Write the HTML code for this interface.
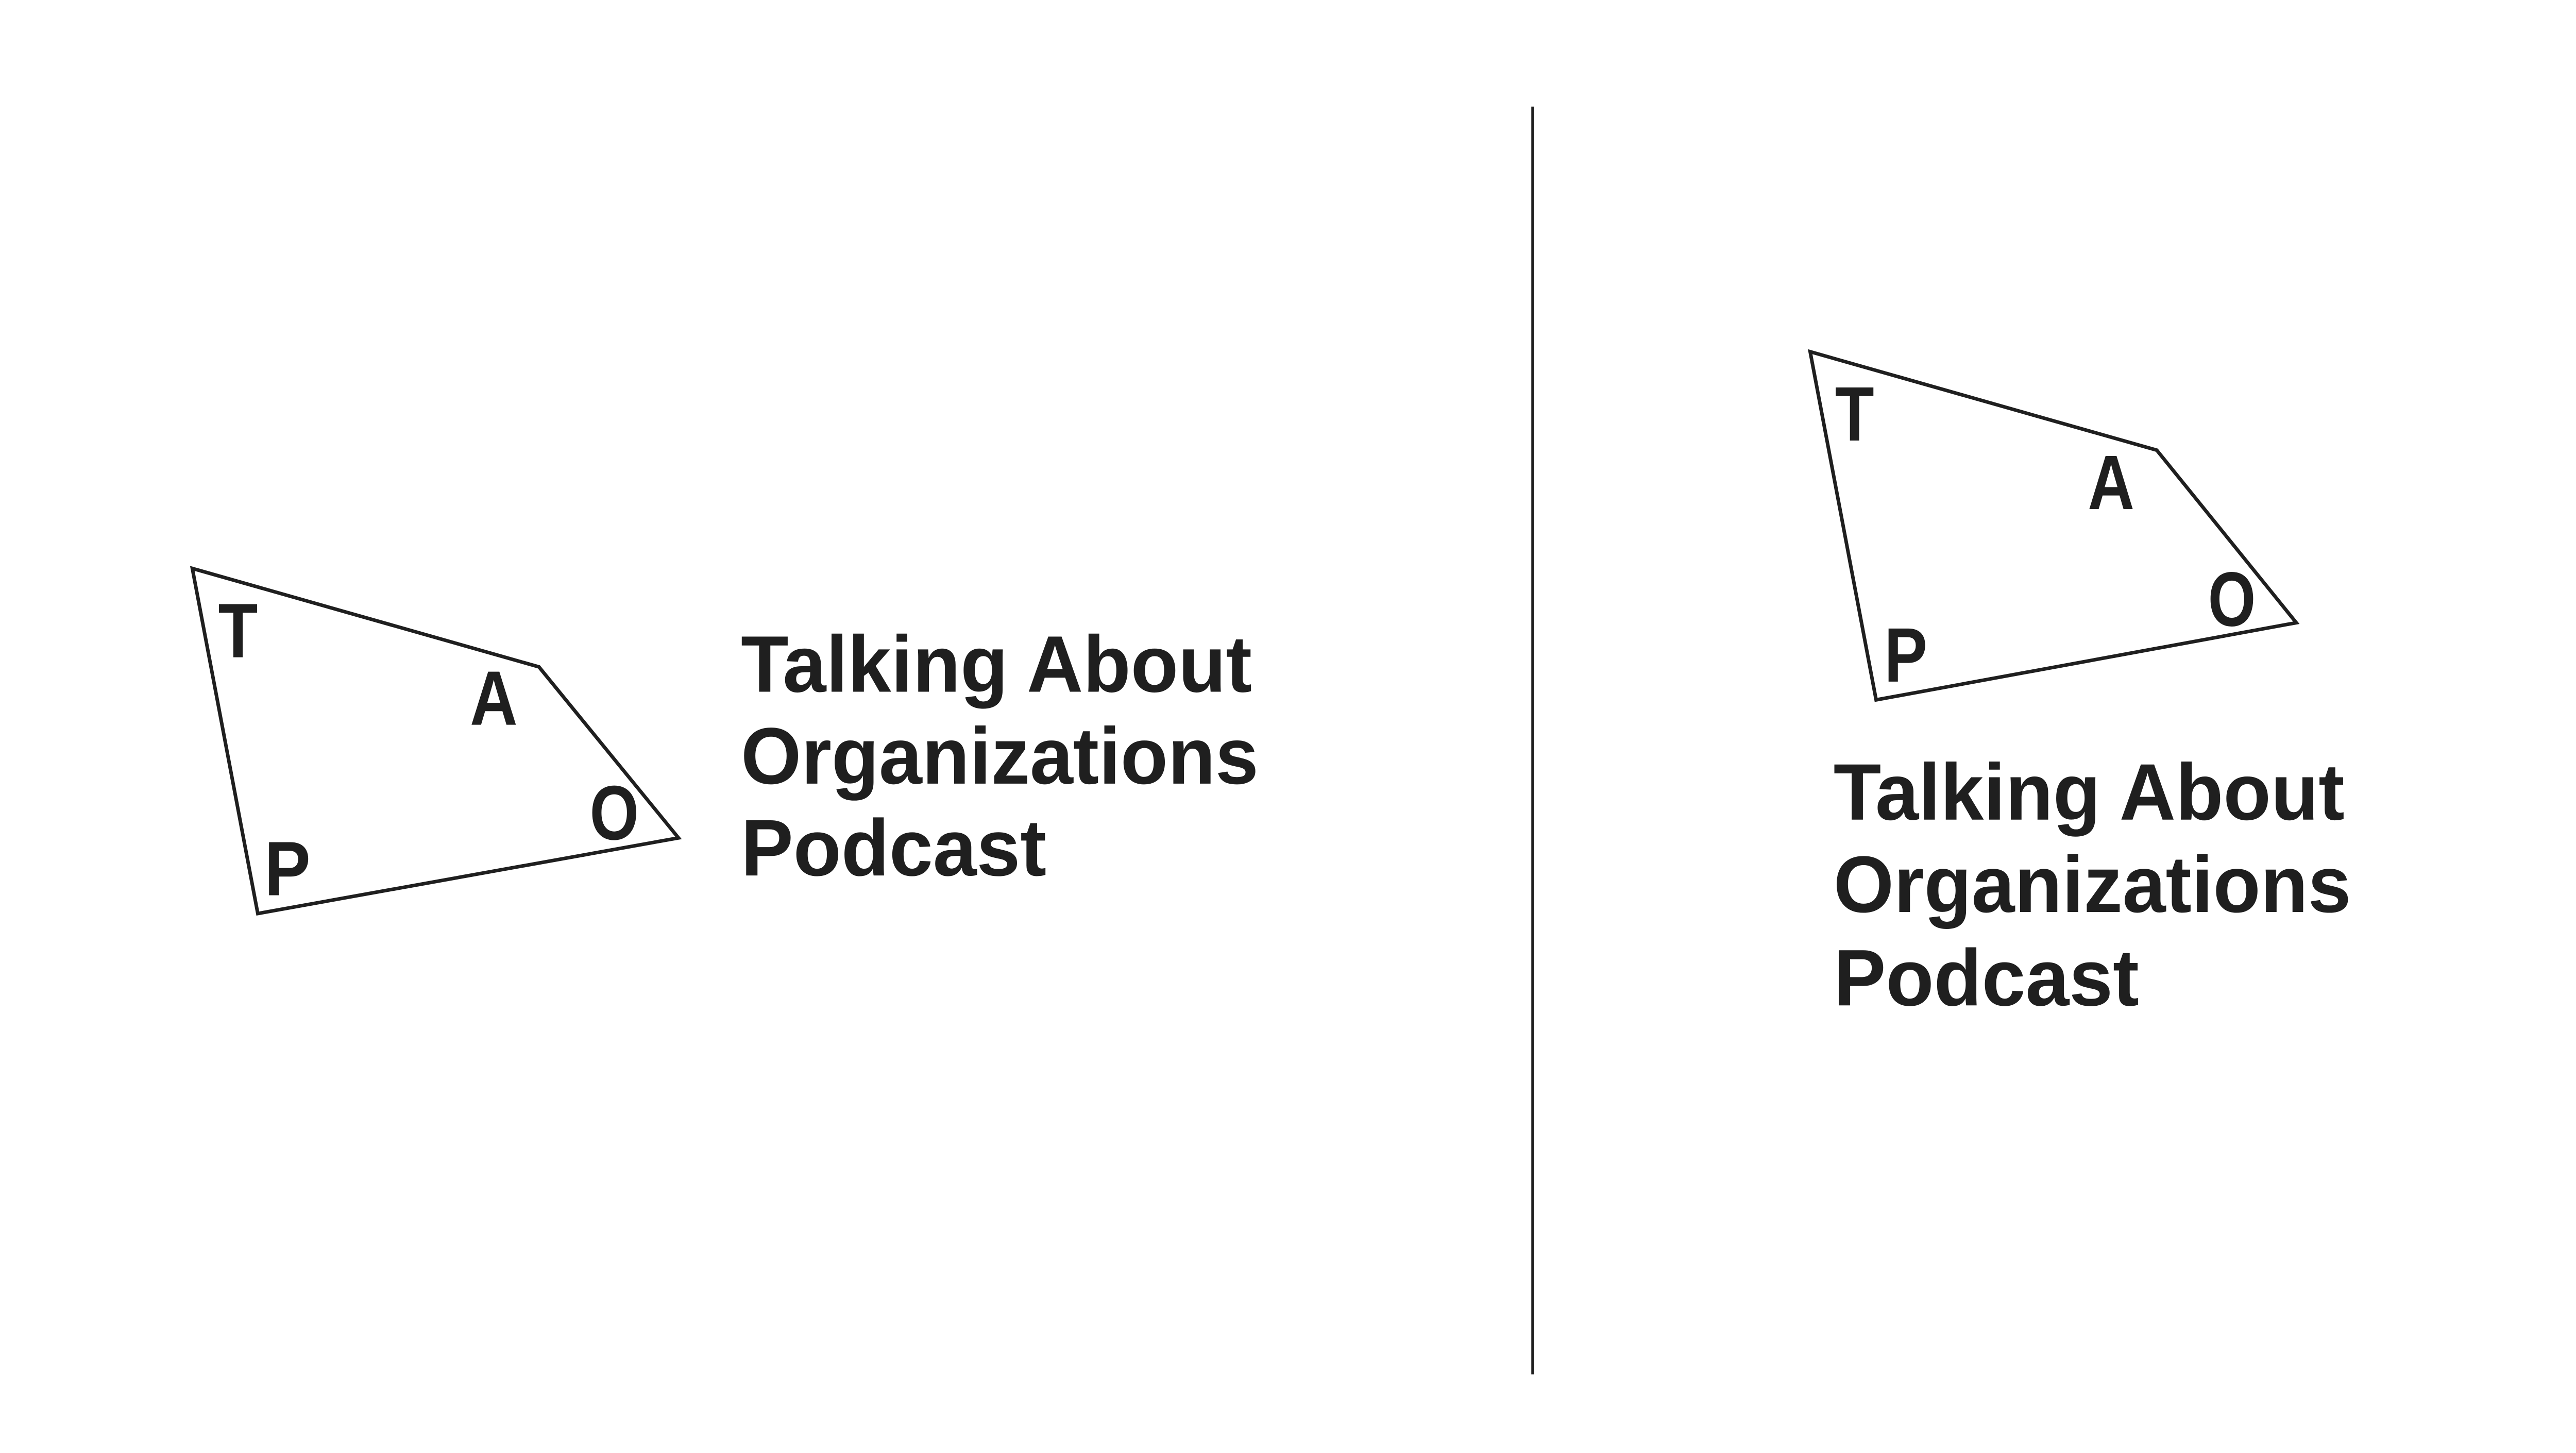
<!DOCTYPE html>
<html><head><meta charset="utf-8"><style>
html,body{margin:0;padding:0;background:#fff;}
svg{display:block;}
text{font-family:"Liberation Sans",Arial,sans-serif;font-weight:bold;fill:#1f1f1f;}
</style></head><body>
<svg width="5024" height="2820" viewBox="0 0 5024 2820" xmlns="http://www.w3.org/2000/svg">
<rect width="5024" height="2820" fill="#fff"/>
<g transform="scale(0.985)">
<line x1="3020" y1="210" x2="3020" y2="2708" stroke="#1f1f1f" stroke-width="5"/>
<polygon points="379,1120 1062,1314 1337,1651 508,1800" fill="none" stroke="#1f1f1f" stroke-width="7" stroke-linejoin="miter"/>
<g font-size="152">
<text x="430" y="1295" textLength="78" lengthAdjust="spacingAndGlyphs">T</text>
<text x="926" y="1428" textLength="94" lengthAdjust="spacingAndGlyphs">A</text>
<text x="1162" y="1654" textLength="97" lengthAdjust="spacingAndGlyphs">O</text>
<text x="521" y="1764" textLength="91" lengthAdjust="spacingAndGlyphs">P</text>
</g>
<g font-size="158">
<text x="1460" y="1363" textLength="1007" lengthAdjust="spacingAndGlyphs">Talking About</text>
<text x="1460" y="1544" textLength="1020" lengthAdjust="spacingAndGlyphs">Organizations</text>
<text x="1460" y="1725" textLength="602" lengthAdjust="spacingAndGlyphs">Podcast</text>
</g>
<polygon points="3567,693 4250,887 4525,1227 3697,1379" fill="none" stroke="#1f1f1f" stroke-width="7" stroke-linejoin="miter"/>
<g font-size="152">
<text x="3616" y="868" textLength="77" lengthAdjust="spacingAndGlyphs">T</text>
<text x="4114" y="1003" textLength="92" lengthAdjust="spacingAndGlyphs">A</text>
<text x="4351" y="1233" textLength="94" lengthAdjust="spacingAndGlyphs">O</text>
<text x="3713" y="1343" textLength="85" lengthAdjust="spacingAndGlyphs">P</text>
</g>
<g font-size="158">
<text x="3613" y="1615" textLength="1007" lengthAdjust="spacingAndGlyphs">Talking About</text>
<text x="3613" y="1797" textLength="1020" lengthAdjust="spacingAndGlyphs">Organizations</text>
<text x="3613" y="1981" textLength="602" lengthAdjust="spacingAndGlyphs">Podcast</text>
</g>
</g>
</svg>
</body></html>
